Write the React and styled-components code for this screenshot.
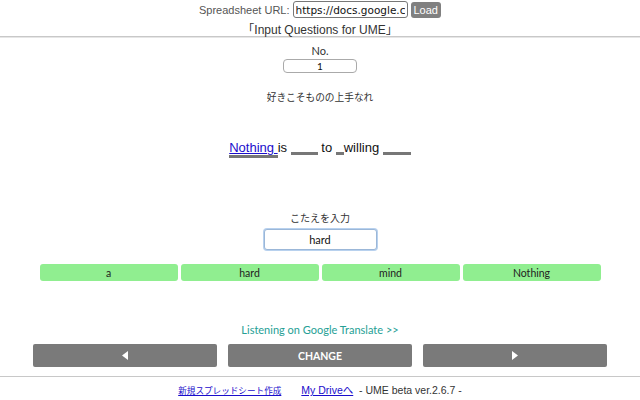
import styled, { createGlobalStyle } from "styled-components"

const Global = createGlobalStyle`
  body {
    margin: 0;
    background: #fff;
    font-family: "Liberation Sans", "Noto Sans CJK JP", sans-serif;
    color: #333;
  }
`

const Page = styled.div`
  width: 640px;
  height: 400px;
  display: flex;
  flex-direction: column;
  align-items: center;
  overflow: hidden;
`

const Header = styled.header`
  width: 100%;
  display: flex;
  flex-direction: column;
  align-items: center;
  padding-top: 1px;
  border-bottom: 1px solid #c8c8c8;
  box-shadow: 0 1px 0 #e6e6e6;
  height: 37px;
  box-sizing: border-box;
`

const UrlRow = styled.div`
  display: flex;
  align-items: center;
  gap: 3px;
  font-size: 11px;
  color: #555;
  height: 17px;
`

const UrlInput = styled.input`
  width: 115px;
  height: 17px;
  box-sizing: border-box;
  border: 1px solid #777;
  border-radius: 3px;
  padding: 0 2px;
  font-family: "DejaVu Sans", sans-serif;
  font-size: 10.5px;
  color: #111;
  outline: none;
`

const LoadButton = styled.button`
  height: 16px;
  padding: 0 3px;
  border: none;
  border-radius: 3px;
  background: #808080;
  color: #fff;
  font-family: "Liberation Sans", sans-serif;
  font-size: 11px;
  line-height: 16px;
`

const Title = styled.div`
  font-size: 12px;
  color: #333;
  margin-top: 2px;
  font-family: "Liberation Sans", "Noto Sans CJK JP", sans-serif;
`

const Label = styled.div`
  font-family: "Lato", "Noto Sans CJK JP", sans-serif;
  font-size: ${({ size }) => size || 11}px;
  color: #333;
  margin-top: ${({ top }) => top || 0}px;
  line-height: 14px;
`

const NumberInput = styled.input`
  width: 74px;
  height: 14px;
  box-sizing: border-box;
  border: 1px solid #aaa;
  border-radius: 4px;
  text-align: center;
  font-family: "Lato", sans-serif;
  font-size: 10px;
  padding: 0;
  margin-top: 1px;
  outline: none;
  color: #111;
`

const Sentence = styled.div`
  margin-top: 36px;
  font-size: 13px;
  font-family: "Liberation Sans", sans-serif;
  color: #111;
  white-space: pre;
  line-height: 16px;
`

const Filled = styled.span`
  color: #1a0dcc;
  border-bottom: 3px solid #777;
  text-decoration: underline;
  text-decoration-color: #1a0dcc;
`

const Blank = styled.span`
  display: inline-block;
  width: ${({ w }) => w}px;
  border-bottom: 3px solid #777;
  vertical-align: -3px;
`

const AnswerInput = styled.input`
  width: 113px;
  height: 21px;
  box-sizing: border-box;
  margin-top: 4px;
  border: 1px solid #9bb7d8;
  border-radius: 3px;
  box-shadow: 0 0 0 1px #b8d1ee;
  text-align: center;
  font-family: "Lato", sans-serif;
  font-size: 11px;
  color: #111;
  outline: none;
`

const Choices = styled.div`
  margin-top: 14px;
  display: grid;
  grid-template-columns: repeat(4, 138px);
  gap: 3px;
`

const Choice = styled.button`
  height: 17px;
  border: none;
  border-radius: 3px;
  background: #90ee90;
  font-family: "Lato", sans-serif;
  font-size: 10.5px;
  color: #222;
  padding: 0;
`

const Listen = styled.a`
  margin-top: 42px;
  font-family: "Lato", sans-serif;
  font-size: 11px;
  color: #26a095;
  text-decoration: none;
`

const Nav = styled.div`
  margin-top: 8px;
  display: grid;
  grid-template-columns: repeat(3, 184px);
  gap: 11px;
`

const NavButton = styled.button`
  height: 23px;
  border: none;
  border-radius: 2px;
  background: #7a7a7a;
  color: #fff;
  font-family: "Lato", sans-serif;
  font-weight: bold;
  font-size: 10.5px;
  display: flex;
  align-items: center;
  justify-content: center;
  padding: 0;
`

const Footer = styled.footer`
  margin-top: 9px;
  width: 100%;
  border-top: 1px solid #c8c8c8;
  display: flex;
  justify-content: center;
  align-items: baseline;
  padding-top: 5px;
  font-size: 10.5px;
  color: #333;
  font-family: "Liberation Sans", "Noto Sans CJK JP", sans-serif;
  white-space: pre;
`

const FootLink = styled.a`
  color: #1a0dcc;
  text-decoration: underline;
  font-size: ${({ size }) => size || 10.5}px;
  margin-right: ${({ gap }) => gap || 0}px;
`

function Arrow({ dir }) {
  return (
    <svg width="6" height="9" viewBox="0 0 6 9">
      {dir === "left" ? (
        <polygon points="6,0 6,9 0,4.5" fill="#fff" />
      ) : (
        <polygon points="0,0 0,9 6,4.5" fill="#fff" />
      )}
    </svg>
  )
}

const CHOICES = ["a", "hard", "mind", "Nothing"]

export default function App() {
  return (
    <Page>
      <Global />
      <Header>
        <UrlRow>
          <span>Spreadsheet URL:</span>
          <UrlInput defaultValue="https://docs.google.com/spreadsheets" />
          <LoadButton>Load</LoadButton>
        </UrlRow>
        <Title>「Input Questions for UME」</Title>
      </Header>
      <Label top={7}>No.</Label>
      <NumberInput defaultValue="1" />
      <Label top={17} size={9.7}>好きこそものの上手なれ</Label>
      <Sentence>
        <Filled>Nothing </Filled>is <Blank w={27} /> to <Blank w={8} />willing <Blank w={28} />
      </Sentence>
      <Label top={55} size={10}>こたえを入力</Label>
      <AnswerInput defaultValue="hard" />
      <Choices>
        {CHOICES.map((c) => (
          <Choice key={c}>{c}</Choice>
        ))}
      </Choices>
      <Listen>Listening on Google Translate &gt;&gt;</Listen>
      <Nav>
        <NavButton>
          <Arrow dir="left" />
        </NavButton>
        <NavButton>CHANGE</NavButton>
        <NavButton>
          <Arrow dir="right" />
        </NavButton>
      </Nav>
      <Footer>
        <FootLink size={8.6} gap={20}>新規スプレッドシート作成</FootLink>
        <FootLink>My Driveへ</FootLink>
        <span>{"  - UME beta ver.2.6.7 -"}</span>
      </Footer>
    </Page>
  )
}
